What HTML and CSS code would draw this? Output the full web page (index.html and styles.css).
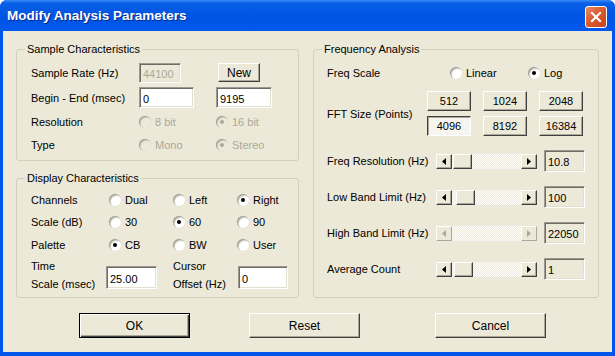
FILE: index.html
```html
<!DOCTYPE html>
<html lang="en">
  <head>
    <meta charset="UTF-8" />
    <title>Modify Analysis Parameters</title>
    <link rel="stylesheet" href="styles.css">
  </head>
  <body>
    <div class="window">
      <div class="titlebar">
        <span class="title">Modify Analysis Parameters</span>
        <span class="close">
          <svg width="20" height="20" viewBox="0 0 20 20">
            <path d="M6 6 L14 14 M14 6 L6 14" stroke="#fff" stroke-width="2.2" stroke-linecap="square" />
          </svg>
        </span>
      </div>

      <div class="client">
        <div class="groups">
          <div class="col-left">
            <fieldset class="group sample">
              <legend>Sample Characteristics</legend>
              <div class="sample-grid">
                <span>Sample Rate (Hz)</span>
                <input class="field rate" value="44100" disabled />
                <button class="btn new">New</button>

                <span>Begin - End (msec)</span>
                <input class="field begin" value="0" />
                <input class="field end" value="9195" />

                <span>Resolution</span>
                <span class="radio dis"><i class="rb"></i>8 bit</span>
                <span class="radio dis on"><i class="rb"></i>16 bit</span>

                <span>Type</span>
                <span class="radio dis"><i class="rb"></i>Mono</span>
                <span class="radio dis on"><i class="rb"></i>Stereo</span>
              </div>
            </fieldset>

            <fieldset class="group display">
              <legend>Display Characteristics</legend>
              <div class="display-grid">
                <span>Channels</span>
                <span class="radio"><i class="rb"></i>Dual</span>
                <span class="radio"><i class="rb"></i>Left</span>
                <span class="radio on"><i class="rb"></i>Right</span>

                <span>Scale (dB)</span>
                <span class="radio"><i class="rb"></i>30</span>
                <span class="radio on"><i class="rb"></i>60</span>
                <span class="radio"><i class="rb"></i>90</span>

                <span>Palette</span>
                <span class="radio on"><i class="rb"></i>CB</span>
                <span class="radio"><i class="rb"></i>BW</span>
                <span class="radio"><i class="rb"></i>User</span>
              </div>
              <div class="offset-row">
                <span class="two-line time-label">Time<br />Scale (msec)</span>
                <input class="field time" value="25.00" />
                <span class="two-line cursor-label">Cursor<br />Offset (Hz)</span>
                <input class="field cursor" value="0" />
              </div>
            </fieldset>
          </div>

          <fieldset class="group freq">
            <legend>Frequency Analysis</legend>
            <div class="freq-body">
              <div class="scale-row">
                <span class="freq-label">Freq Scale</span>
                <span class="radio linear"><i class="rb"></i>Linear</span>
                <span class="radio on"><i class="rb"></i>Log</span>
              </div>

              <div class="fft-row">
                <span class="fft-label">FFT Size (Points)</span>
                <div class="fft-grid">
                  <button class="btn">512</button>
                  <button class="btn">1024</button>
                  <button class="btn">2048</button>
                  <button class="btn pressed">4096</button>
                  <button class="btn">8192</button>
                  <button class="btn">16384</button>
                </div>
              </div>

              <div class="slider-row">
                <span class="slider-label">Freq Resolution (Hz)</span>
                <div class="scroll">
                  <span class="sb-btn"><svg width="4" height="7"><path d="M4 0 L0 3.5 L4 7z" /></svg></span>
                  <span class="sb-track"><span class="sb-thumb" style="margin-left: 1px"></span></span>
                  <span class="sb-btn"><svg width="4" height="7"><path d="M0 0 L4 3.5 L0 7z" /></svg></span>
                </div>
                <input class="field value" value="10.8" readonly />
              </div>

              <div class="slider-row">
                <span class="slider-label">Low Band Limit (Hz)</span>
                <div class="scroll">
                  <span class="sb-btn"><svg width="4" height="7"><path d="M4 0 L0 3.5 L4 7z" /></svg></span>
                  <span class="sb-track"><span class="sb-thumb" style="margin-left: 4px"></span></span>
                  <span class="sb-btn"><svg width="4" height="7"><path d="M0 0 L4 3.5 L0 7z" /></svg></span>
                </div>
                <input class="field value" value="100" readonly />
              </div>

              <div class="slider-row">
                <span class="slider-label">High Band Limit (Hz)</span>
                <div class="scroll off">
                  <span class="sb-btn"><svg width="4" height="7"><path d="M4 0 L0 3.5 L4 7z" /></svg></span>
                  <span class="sb-track"></span>
                  <span class="sb-btn"><svg width="4" height="7"><path d="M0 0 L4 3.5 L0 7z" /></svg></span>
                </div>
                <input class="field value" value="22050" readonly />
              </div>

              <div class="slider-row">
                <span class="slider-label">Average Count</span>
                <div class="scroll">
                  <span class="sb-btn"><svg width="4" height="7"><path d="M4 0 L0 3.5 L4 7z" /></svg></span>
                  <span class="sb-track"><span class="sb-thumb" style="margin-left: 2px"></span></span>
                  <span class="sb-btn"><svg width="4" height="7"><path d="M0 0 L4 3.5 L0 7z" /></svg></span>
                </div>
                <input class="field value" value="1" readonly />
              </div>
            </div>
          </fieldset>
        </div>

        <div class="actions">
          <button class="btn big default">OK</button>
          <button class="btn big reset">Reset</button>
          <button class="btn big cancel">Cancel</button>
        </div>
      </div>
    </div>
  </body>
</html>
```

FILE: styles.css
```css
html {
  background: #fff;
}

body {
  margin: 0;
  font-family: "Liberation Sans", Arial, sans-serif;
  font-size: 11px;
  color: #000;
}

.window {
  width: 615px;
  height: 356px;
  background: #0055ea;
  border-radius: 7px 7px 0 0;
  display: flex;
  flex-direction: column;
  overflow: hidden;
}

.titlebar {
  height: 31px;
  flex: none;
  box-sizing: border-box;
  display: flex;
  align-items: center;
  justify-content: space-between;
  padding: 0 8px 0 7px;
  background: linear-gradient(#3d8af7 0, #0a5fe8 3px, #0054e3 55%, #0058ee 100%);
}

.title {
  color: #fff;
  font-weight: bold;
  font-size: 13.5px;
  text-shadow: 1px 1px 0 #0a2a8a;
}

.close {
  width: 20px;
  height: 20px;
  margin-top: 3px;
  border: 1px solid #fff;
  border-radius: 3px;
  background: linear-gradient(135deg, #e98a66, #d8582c 50%, #c7431c);
  display: flex;
}

.client {
  flex: 1;
  margin: 0 3px 4px;
  padding: 11px 12px 0 13px;
  background: #ece9d8;
}

.groups {
  display: flex;
  gap: 14px;
}

.col-left {
  width: 283px;
  display: flex;
  flex-direction: column;
  gap: 10px;
}

.group {
  margin: 0;
  padding: 4px 0;
  border: 1px solid #d0d0bf;
  border-radius: 3px;
  min-width: 0;
}

.group legend {
  margin-left: 8px;
  padding: 0 2px;
  line-height: 14px;
}

.freq {
  width: 286px;
  box-sizing: border-box;
  padding: 6px 0 0;
}

.freq-body {
  padding-left: 13px;
}

/* sample */
.sample-grid {
  display: grid;
  grid-template-columns: 108px 77px 1fr;
  grid-template-rows: 25px 25px 23px 23px;
  align-items: center;
  padding-left: 14px;
}

/* display */
.display-grid {
  display: grid;
  grid-template-columns: 78px 64px 64px 1fr;
  grid-template-rows: 22px 22px 23px;
  align-items: center;
  padding-left: 14px;
}

.offset-row {
  display: flex;
  align-items: center;
  height: 36px;
  margin-top: 1px;
  padding-left: 14px;
}

.two-line {
  line-height: 18px;
}

.time-label {
  width: 75px;
}

.cursor-label {
  width: 65px;
  margin-left: 16px;
}

/* fields */
.field {
  font: inherit;
  color: #000;
  box-sizing: border-box;
  height: 21px;
  margin: 0;
  padding: 2px 0 0 3px;
  background: #fff;
  border: 1px solid;
  border-color: #9c9a90 #fff #fff #9c9a90;
  box-shadow: inset 1px 1px 0 #6e6c64, inset -1px -1px 0 #e2dfd0;
  outline: none;
}

.rate {
  width: 42px;
  height: 20px;
  background: #ece9d8;
  color: #aca899;
}

.begin {
  width: 55px;
}

.end {
  width: 56px;
}

.time {
  width: 51px;
  height: 23px;
  margin-top: 5px;
}

.cursor {
  width: 50px;
  height: 23px;
  margin-top: 5px;
}

.value {
  width: 41px;
  height: 22px;
  background: #ece9d8;
}

/* buttons */
.btn {
  font: inherit;
  color: #000;
  margin: 0;
  padding: 0;
  background: #ece9d8;
  border: 1px solid;
  border-color: #fff #404040 #404040 #fff;
  box-shadow: inset -1px -1px 0 #aca899;
}

.new {
  width: 42px;
  height: 19px;
  margin-left: 2px;
  font-size: 12px;
}

.pressed {
  background: #f6f5ef;
  border-color: #404040 #fff #fff #404040;
  box-shadow: inset 1px 1px 0 #aca899;
}

/* radios */
.radio {
  display: inline-flex;
  align-items: center;
  gap: 4px;
  white-space: nowrap;
}

.rb {
  width: 12px;
  height: 12px;
  border-radius: 50%;
  background: #fff;
  box-shadow: inset 1px 1px 0 #a09e96, inset 2px 2px 0 #d8d6cc, 0 0 0 0.5px #e0ded4;
  display: flex;
  align-items: center;
  justify-content: center;
}

.radio.on .rb::after {
  content: "";
  width: 4px;
  height: 4px;
  border-radius: 50%;
  background: #000;
}

.radio.dis {
  color: #aca899;
}

.radio.dis .rb {
  background: #ece9d8;
}

.radio.dis.on .rb::after {
  background: #aca899;
}

/* frequency */
.scale-row {
  display: flex;
  align-items: center;
  height: 22px;
}

.freq-label {
  width: 123px;
}

.linear {
  width: 78px;
}

.fft-row {
  display: flex;
  align-items: center;
  margin-top: 7px;
}

.fft-label {
  width: 100px;
}

.fft-grid {
  display: grid;
  grid-template-columns: repeat(3, 44px);
  grid-auto-rows: 20px;
  column-gap: 12px;
  row-gap: 5px;
}

.slider-row {
  display: flex;
  align-items: center;
  height: 22px;
  margin-top: 14px;
}

.slider-label {
  width: 109px;
}

.scroll {
  width: 101px;
  height: 15px;
  display: flex;
  margin-right: 7px;
}

.sb-btn {
  width: 16px;
  flex: none;
  box-sizing: border-box;
  display: flex;
  align-items: center;
  justify-content: center;
  background: #ece9d8;
  border: 1px solid;
  border-color: #fff #404040 #404040 #fff;
  box-shadow: inset -1px -1px 0 #aca899;
}

.sb-btn svg {
  fill: #000;
}

.sb-track {
  flex: 1;
  display: flex;
  background: repeating-conic-gradient(#ece9d8 0 25%, #fff 0 50%) 0 0 / 2px 2px;
}

.sb-thumb {
  width: 19px;
  box-sizing: border-box;
  background: #ece9d8;
  border: 1px solid;
  border-color: #fff #404040 #404040 #fff;
  box-shadow: inset -1px -1px 0 #aca899;
}

.scroll.off .sb-btn svg {
  fill: #aca899;
}

.scroll.off .sb-btn {
  border-color: #fff #aca899 #aca899 #fff;
  box-shadow: none;
}

/* dialog buttons */
.actions {
  display: flex;
  margin-top: 15px;
  padding-left: 63px;
}

.big {
  width: 111px;
  height: 25px;
  font-size: 12px;
}

.default {
  border: 1px solid #000;
  box-shadow: inset 1px 1px 0 #fff, inset -1px -1px 0 #404040, inset -2px -2px 0 #aca899;
}

.reset {
  margin-left: 59px;
}

.cancel {
  margin-left: 75px;
}
```
